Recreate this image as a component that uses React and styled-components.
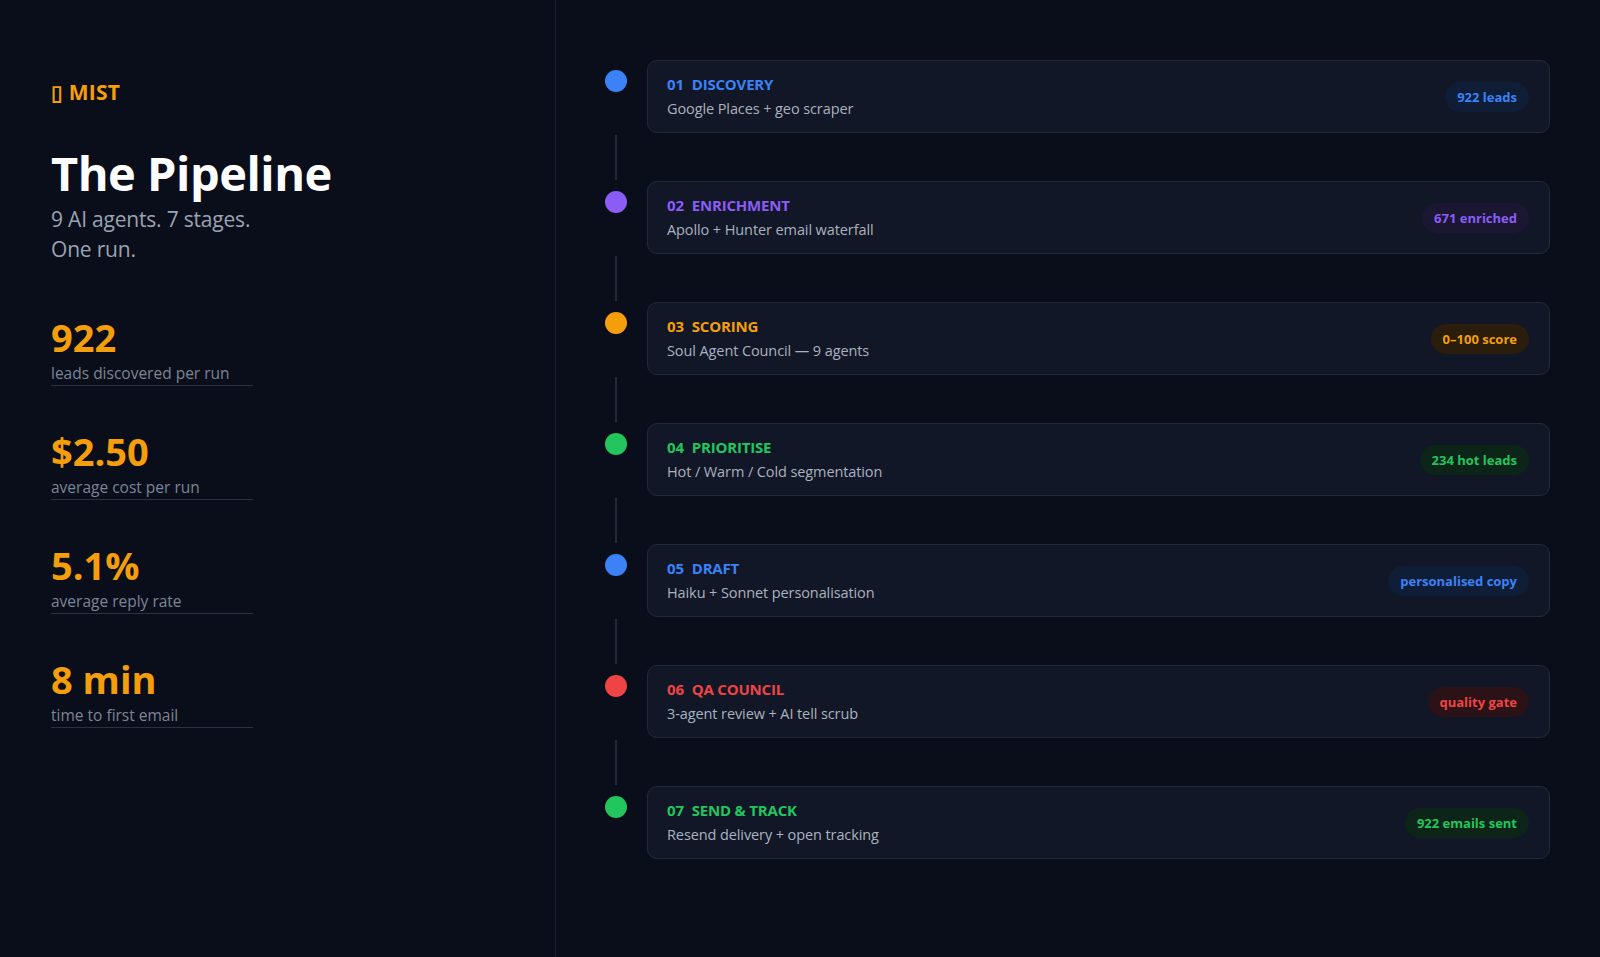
import React from "react";
import styled, { createGlobalStyle } from "styled-components";

const Global = createGlobalStyle`
  html, body { margin: 0; padding: 0; background: #0a0e1a; }
  body { font-family: "Open Sans", "Noto Sans", sans-serif; }
`;

const Page = styled.div`
  display: flex;
  width: 1600px;
  height: 957px;
  background: #0a0e1a;
  color: #e5e7eb;
`;

const Side = styled.aside`
  width: 504px;
  flex-shrink: 0;
  padding: 78px 0 0 51px;
  border-right: 1px solid #1c2231;
  display: flex;
  flex-direction: column;
`;

const Brand = styled.div`
  color: #f59e0b;
  font-weight: 700;
  font-size: 21px;
  letter-spacing: 0.2px;
`;

const Title = styled.h1`
  margin: 42px 0 0;
  font-size: 47px;
  font-weight: 700;
  color: #fff;
  line-height: 1.1;
  letter-spacing: -0.5px;
`;

const Sub = styled.p`
  margin: 4px 0 0;
  font-size: 21px;
  line-height: 30px;
  color: #9aa3b2;
  letter-spacing: -0.2px;
`;

const Stats = styled.div`
  margin-top: 48px;
  display: flex;
  flex-direction: column;
  gap: 40px;
`;

const Stat = styled.div`
  width: 202px;
  border-bottom: 1px solid #2a3140;
  padding-bottom: 1px;
`;

const StatValue = styled.div`
  color: #f59e0b;
  font-weight: 700;
  font-size: 38px;
  line-height: 50px;
`;

const StatLabel = styled.div`
  color: #7c8596;
  font-size: 15.5px;
  line-height: 22px;
`;

const Main = styled.main`
  flex: 1;
  padding: 60px 50px 0 40px;
  display: flex;
  flex-direction: column;
`;

const Row = styled.div`
  display: flex;
  align-items: flex-start;
`;

const DotCol = styled.div`
  width: 40px;
  flex-shrink: 0;
  display: flex;
  justify-content: center;
  padding-top: 10px;
  margin-right: 11px;
`;

const Dot = styled.div`
  width: 22px;
  height: 22px;
  border-radius: 50%;
  background: ${(p) => p.$c};
`;

const Card = styled.div`
  flex: 1;
  height: 73px;
  box-sizing: border-box;
  background: #111726;
  border: 1px solid #222a3a;
  border-radius: 10px;
  padding: 0 20px 0 19px;
  display: flex;
  align-items: center;
  justify-content: space-between;
`;

const Heading = styled.div`
  color: ${(p) => p.$c};
  font-weight: 700;
  font-size: 15px;
  line-height: 22px;
  display: flex;
  gap: 8px;
  letter-spacing: -0.2px;
`;

const Desc = styled.div`
  color: #aab2bf;
  font-size: 14.5px;
  line-height: 22px;
  margin-top: 3px;
  letter-spacing: -0.1px;
`;

const Badge = styled.span`
  color: ${(p) => p.$c};
  background: ${(p) => p.$bg};
  font-weight: 700;
  font-size: 13px;
  padding: 6px 12px;
  border-radius: 999px;
`;

const Gap = styled.div`
  height: 48px;
  display: flex;
`;

const GapLine = styled.div`
  width: 40px;
  display: flex;
  justify-content: center;
  padding-top: 2px;
  &::before {
    content: "";
    width: 2px;
    height: 45px;
    background: #222a38;
  }
`;

const stages = [
  ["01", "DISCOVERY", "Google Places + geo scraper", "922 leads", "#3b82f6", "#0f1d36"],
  ["02", "ENRICHMENT", "Apollo + Hunter email waterfall", "671 enriched", "#8b5cf6", "#1b1733"],
  ["03", "SCORING", "Soul Agent Council — 9 agents", "0–100 score", "#f59e0b", "#2a1d0c"],
  ["04", "PRIORITISE", "Hot / Warm / Cold segmentation", "234 hot leads", "#22c55e", "#0d2419"],
  ["05", "DRAFT", "Haiku + Sonnet personalisation", "personalised copy", "#3b82f6", "#0f1d36"],
  ["06", "QA COUNCIL", "3-agent review + AI tell scrub", "quality gate", "#ef4444", "#2a1216"],
  ["07", "SEND & TRACK", "Resend delivery + open tracking", "922 emails sent", "#22c55e", "#0d2419"],
];

const stats = [
  ["922", "leads discovered per run"],
  ["$2.50", "average cost per run"],
  ["5.1%", "average reply rate"],
  ["8 min", "time to first email"],
];

export default function App() {
  return (
    <Page>
      <Global />
      <Side>
        <Brand>▯ MIST</Brand>
        <Title>The Pipeline</Title>
        <Sub>
          9 AI agents. 7 stages.
          <br />
          One run.
        </Sub>
        <Stats>
          {stats.map(([v, l]) => (
            <Stat key={l}>
              <StatValue>{v}</StatValue>
              <StatLabel>{l}</StatLabel>
            </Stat>
          ))}
        </Stats>
      </Side>
      <Main>
        {stages.map(([n, t, d, b, c, bg], i) => (
          <React.Fragment key={n}>
            <Row>
              <DotCol>
                <Dot $c={c} />
              </DotCol>
              <Card>
                <div>
                  <Heading $c={c}>
                    <span>{n}</span>
                    <span>{t}</span>
                  </Heading>
                  <Desc>{d}</Desc>
                </div>
                <Badge $c={c} $bg={bg}>
                  {b}
                </Badge>
              </Card>
            </Row>
            {i < stages.length - 1 && (
              <Gap>
                <GapLine />
              </Gap>
            )}
          </React.Fragment>
        ))}
      </Main>
    </Page>
  );
}
